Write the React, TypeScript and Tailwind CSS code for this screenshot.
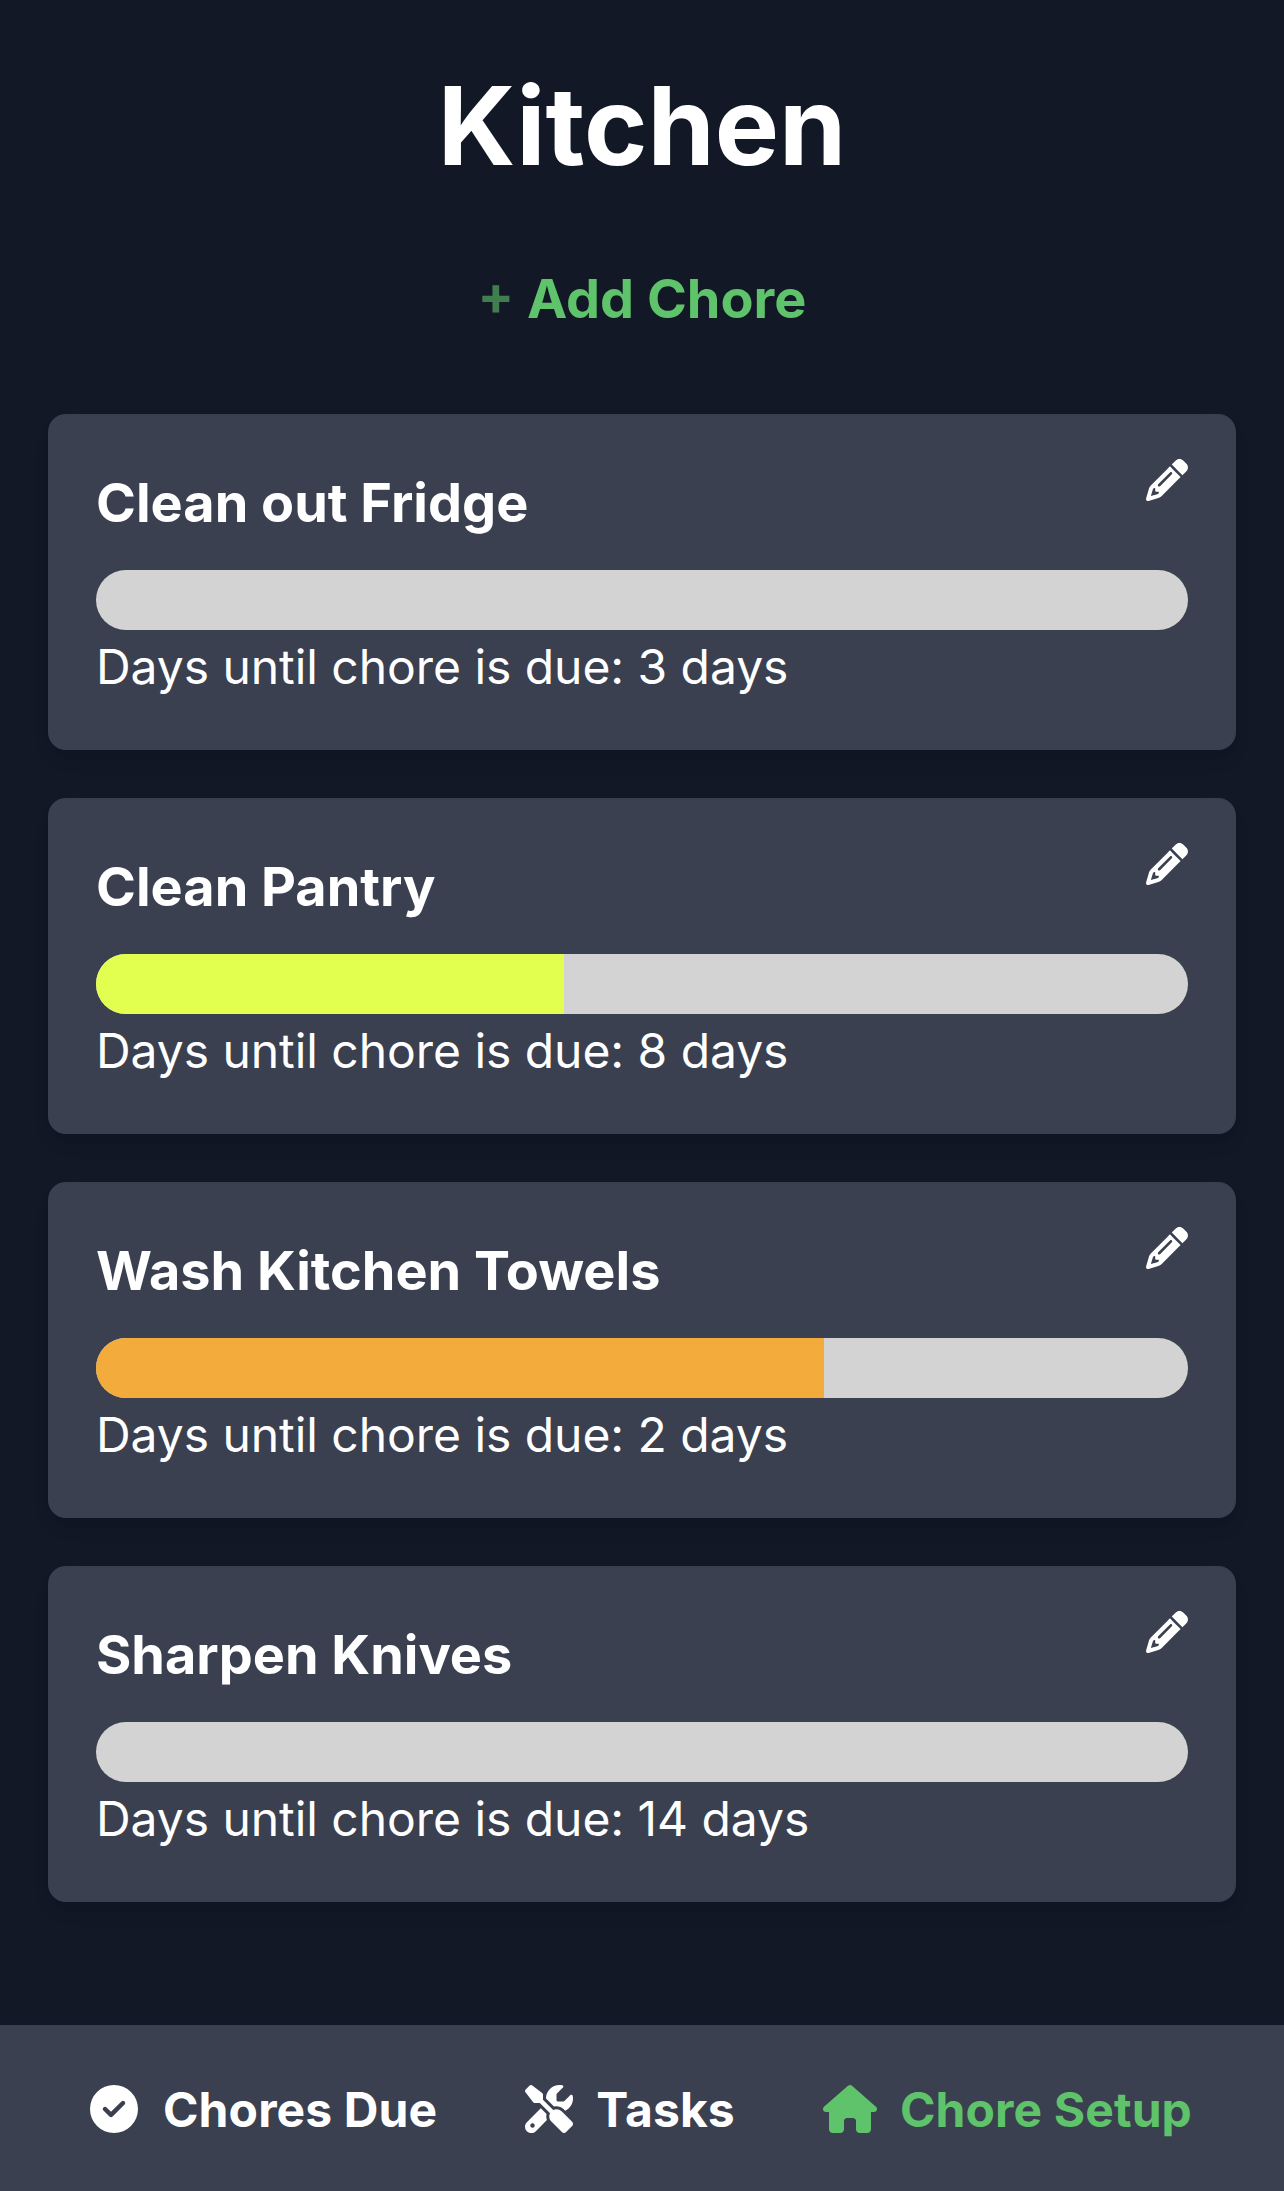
import { FaCircleCheck, FaHouse, FaPencil, FaScrewdriverWrench } from 'react-icons/fa6';

interface Chore {
    id: number;
    title: string;
    daysUntilDue: number;
    progress: number;
    color: string;
}

const chores: Chore[] = [
    { id: 1, title: 'Clean out Fridge', daysUntilDue: 3, progress: 0, color: 'bg-transparent' },
    { id: 2, title: 'Clean Pantry', daysUntilDue: 8, progress: 42.9, color: 'bg-[#e2ff50]' },
    { id: 3, title: 'Wash Kitchen Towels', daysUntilDue: 2, progress: 66.7, color: 'bg-[#f3ac3c]' },
    { id: 4, title: 'Sharpen Knives', daysUntilDue: 14, progress: 0, color: 'bg-transparent' },
];

function ChoreCard({ chore }: { chore: Chore }) {
    return (
        <li className="h-[336px] bg-[#3a404f] rounded-[18px] px-12 pt-[45px] shadow-[0_12px_18px_-3px_rgba(0,0,0,0.1),0_6px_12px_-6px_rgba(0,0,0,0.1)]">
            <div className="flex items-start justify-between">
                <h2 className="mt-[5px] text-[54px] leading-[78px] font-bold">{chore.title}</h2>
                <button aria-label="Edit chore">
                    <FaPencil className="size-[42px]" />
                </button>
            </div>
            <div className="mt-7 h-[60px] bg-[#d3d3d3] rounded-[30px] overflow-hidden">
                <div className={`h-full ${chore.color}`} style={{ width: `${chore.progress}%` }} />
            </div>
            <p className="mt-px text-5xl leading-[72px] tracking-[-0.05px]">
                Days until chore is due: {chore.daysUntilDue} days
            </p>
        </li>
    );
}

export default function App() {
    return (
        <div className="h-[2191px] flex flex-col bg-[#121826] text-white font-['Inter',sans-serif]">
            <main className="flex-1 px-12 pt-[66px]">
                <h1 className="text-[108px] leading-[120px] font-bold text-center">Kitchen</h1>
                <div className="mt-[71px] flex justify-center">
                    <button className="text-[54px] leading-[84px] font-bold text-[#5fc36b]">
                        <span className="opacity-60">+</span> Add Chore
                    </button>
                </div>
                <ul className="mt-[73px] flex flex-col gap-12">
                    {chores.map((chore) => (
                        <ChoreCard key={chore.id} chore={chore} />
                    ))}
                </ul>
            </main>

            {/* Bottom Navigation */}
            <nav className="h-[166px] flex items-start justify-between pl-[90px] pr-[92px] pt-12 bg-[#3a404f] text-5xl leading-[74px] font-bold tracking-[0.1px]">
                <a className="flex items-center gap-[25px]">
                    <FaCircleCheck className="size-12 -mt-0.5" />
                    Chores Due
                </a>
                <a className="flex items-center gap-[23px]">
                    <FaScrewdriverWrench className="size-12 -mt-0.5" />
                    Tasks
                </a>
                <a className="flex items-center gap-[23px] text-[#5fc36b]">
                    <FaHouse className="h-12 w-[54px] -mt-0.5" />
                    Chore Setup
                </a>
            </nav>
        </div>
    );
}
